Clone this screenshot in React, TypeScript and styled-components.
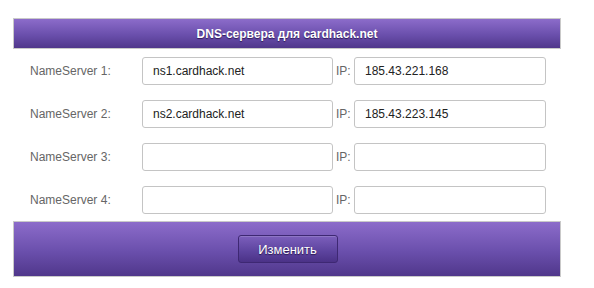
import * as React from "react"
import styled, { createGlobalStyle } from "styled-components"

const GlobalStyle = createGlobalStyle`
  body {
    margin: 0;
    background: #fff;
    font-family: "Liberation Sans", Arial, sans-serif;
  }
`

const Page = styled.div`
  padding: 18px 0 0 13px;
`

const Panel = styled.form`
  width: 548px;
  margin: 0;
`

const Bar = styled.div<{ $tall?: boolean }>`
  border: 1px solid #c9c9c9;
  height: ${p => (p.$tall ? "54px" : "29px")};
  background: linear-gradient(to bottom, #8c6cca 0%, #6a4fac 55%, #50378b 100%);
  display: flex;
  align-items: center;
  justify-content: center;
`

const Title = styled.h2`
  margin: 0;
  font-size: 12px;
  font-weight: bold;
  color: #fff;
  text-shadow: 0 1px 1px #2e1c57;
`

const Rows = styled.div`
  display: grid;
  grid-template-columns: 112px 191px 21px 192px;
  row-gap: 15px;
  padding: 8px 0 7px 17px;
  align-items: center;
`

const Label = styled.label`
  font-size: 12px;
  color: #666;
`

const IpLabel = styled(Label)`
  padding-left: 3px;
`

const Field = styled.input`
  box-sizing: border-box;
  height: 28px;
  width: 100%;
  margin: 0;
  padding: 0 10px;
  border: 1px solid #c4c4c4;
  border-radius: 3px;
  font-family: "Liberation Sans", Arial, sans-serif;
  font-size: 12px;
  color: #222;
  background: #fff;
  outline: none;
`

const Button = styled.button`
  box-sizing: border-box;
  width: 100px;
  height: 28px;
  border: 1px solid #3e2873;
  border-radius: 3px;
  background: linear-gradient(to bottom, #7c5fbc 0%, #5c439e 60%, #4b3287 100%);
  box-shadow: inset 0 1px 0 rgba(255, 255, 255, 0.15);
  color: #fff;
  font-family: "Liberation Sans", Arial, sans-serif;
  font-size: 13px;
  text-shadow: 0 1px 1px #2a1850;
  cursor: pointer;
  margin-left: 1px;
`

const servers = [
  { name: "ns1.cardhack.net", ip: "185.43.221.168" },
  { name: "ns2.cardhack.net", ip: "185.43.223.145" },
  { name: "", ip: "" },
  { name: "", ip: "" },
]

export default function App() {
  return (
    <Page>
      <GlobalStyle />
      <Panel onSubmit={e => e.preventDefault()}>
        <Bar>
          <Title>DNS-сервера для cardhack.net</Title>
        </Bar>
        <Rows>
          {servers.map((s, i) => (
            <React.Fragment key={i}>
              <Label>NameServer {i + 1}:</Label>
              <Field defaultValue={s.name} />
              <IpLabel>IP:</IpLabel>
              <Field defaultValue={s.ip} />
            </React.Fragment>
          ))}
        </Rows>
        <Bar $tall>
          <Button type="submit">Изменить</Button>
        </Bar>
      </Panel>
    </Page>
  )
}
